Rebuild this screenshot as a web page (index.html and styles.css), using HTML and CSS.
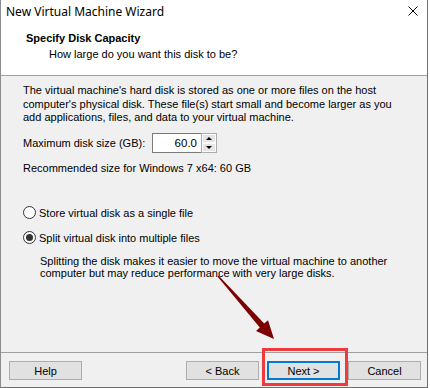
FILE: index.html
```html
<!DOCTYPE html>
<html lang="en">
<head>
    <meta charset="UTF-8">
    <title>New Virtual Machine Wizard</title>
    <link rel="stylesheet" href="styles.css">
</head>
<body>
    <div class="window">
        <div class="titlebar">
            <span class="title">New Virtual Machine Wizard</span>
            <svg class="close" width="10" height="10" viewBox="0 0 10 10">
                <path d="M0.5,0.5 L9.5,9.5 M9.5,0.5 L0.5,9.5" stroke="#000" stroke-width="1" fill="none"/>
            </svg>
        </div>
        <div class="header">
            <h1>Specify Disk Capacity</h1>
            <p>How large do you want this disk to be?</p>
        </div>
        <div class="content">
            <p class="intro">The virtual machine's hard disk is stored as one or more files on the host computer's physical disk. These file(s) start small and become larger as you add applications, files, and data to your virtual machine.</p>
            <div class="size-row">
                <label>Maximum disk size (GB):</label>
                <div class="spinner">
                    <div class="spin-value">60.0</div>
                    <div class="spin-btns">
                        <div class="spin-btn"><span class="tri-up"></span></div>
                        <div class="spin-btn"><span class="tri-down"></span></div>
                    </div>
                </div>
            </div>
            <p class="recommend">Recommended size for Windows 7 x64: 60 GB</p>
            <div class="options">
                <div class="radio-row"><span class="radio"></span>Store virtual disk as a single file</div>
                <div class="radio-row"><span class="radio checked"></span>Split virtual disk into multiple files</div>
                <p class="desc">Splitting the disk makes it easier to move the virtual machine to another computer but may reduce performance with very large disks.</p>
            </div>
        </div>
        <div class="footer">
            <button class="btn">Help</button>
            <div class="right-btns">
                <button class="btn">&lt; Back</button>
                <button class="btn default">Next &gt;</button>
                <button class="btn">Cancel</button>
            </div>
        </div>
    </div>

    <!-- annotation overlay -->
    <svg class="arrow" width="430" height="388" viewBox="0 0 430 388">
        <polygon points="217.5,276.5 218.5,275.5 264.2,323.6 268,320.3 274,339 256,330.9 259.8,327.6" fill="#7d0000"/>
    </svg>
    <div class="highlight"></div>
</body>
</html>
```

FILE: styles.css
```css
body {
    margin: 0;
    width: 430px;
    height: 388px;
    background: #fff;
    font-family: "Liberation Sans", Arial, sans-serif;
    font-size: 11px;
    color: #000;
    position: relative;
    overflow: hidden;
}
.window {
    width: 428px;
    height: 388px;
    box-sizing: border-box;
    border-left: 1px solid #8c8c8c;
    border-right: 1px solid #6e6e6e;
    border-bottom: 1px solid #6e6e6e;
    display: flex;
    flex-direction: column;
    background: #f0f0f0;
}
.titlebar {
    height: 22px;
    background: #fff;
    display: flex;
    align-items: center;
    justify-content: space-between;
    padding: 0 9px 0 5px;
}
.title {
    font-family: "Noto Sans", sans-serif;
    font-size: 12px;
}
.header {
    height: 54px;
    background: #fff;
    border-bottom: 1px solid #a0a0a0;
    box-sizing: border-box;
    padding: 9px 0 0 25px;
}
.header h1 {
    margin: 0;
    font-size: 11px;
    font-weight: bold;
    line-height: 14px;
}
.header p {
    margin: 2px 0 0 23px;
    line-height: 14px;
}
.content {
    flex: 1;
    padding: 8px 0 0 22px;
}
.content p {
    margin: 0;
}
.intro {
    line-height: 13.5px;
    width: 390px;
}
.size-row {
    display: flex;
    align-items: center;
    margin-top: 8px;
    height: 20px;
}
.size-row label {
    width: 129px;
}
.spinner {
    display: flex;
    height: 20px;
}
.spin-value {
    width: 49px;
    box-sizing: border-box;
    border: 1px solid #7a7a7a;
    border-right: none;
    background: #fff;
    text-align: right;
    padding-right: 4px;
    line-height: 18px;
    font-size: 11.5px;
}
.spin-btns {
    width: 16px;
    box-sizing: border-box;
    border: 1px solid #adadad;
    display: flex;
    flex-direction: column;
    background: #fff;
}
.spin-btn {
    flex: 1;
    margin: 1px;
    background: #e5e5e5;
    display: flex;
    align-items: center;
    justify-content: center;
}
.tri-up {
    border-left: 3px solid transparent;
    border-right: 3px solid transparent;
    border-bottom: 3px solid #000;
}
.tri-down {
    border-left: 3px solid transparent;
    border-right: 3px solid transparent;
    border-top: 3px solid #000;
}
.recommend {
    margin-top: 9px !important;
}
.options {
    margin-top: 32px;
}
.radio-row {
    display: flex;
    align-items: center;
    height: 14px;
    margin-bottom: 11px;
}
.radio {
    width: 13px;
    height: 13px;
    box-sizing: border-box;
    border: 1px solid #333;
    border-radius: 50%;
    background: #fff;
    margin-right: 3px;
    display: flex;
    align-items: center;
    justify-content: center;
}
.radio.checked::after {
    content: "";
    width: 7px;
    height: 7px;
    border-radius: 50%;
    background: #333;
}
.desc {
    margin: -1px 0 0 17px !important;
    line-height: 12px;
    width: 370px;
}
.footer {
    border-top: 1px solid #a0a0a0;
    height: 35px;
    box-sizing: border-box;
    display: flex;
    justify-content: space-between;
    padding: 8px 6px 0 8px;
}
.right-btns {
    display: flex;
    gap: 8px;
}
.btn {
    width: 73px;
    height: 19px;
    box-sizing: border-box;
    background: #e1e1e1;
    border: 1px solid #adadad;
    font-family: "Liberation Sans", Arial, sans-serif;
    font-size: 11px;
    color: #000;
    padding: 0;
}
.btn.default {
    border: 2px solid #0078d7;
}
.arrow {
    position: absolute;
    left: 0;
    top: 0;
    pointer-events: none;
}
.highlight {
    position: absolute;
    left: 262px;
    top: 348px;
    width: 86px;
    height: 38px;
    box-sizing: border-box;
    border: 3px solid #ef3a3e;
}
```
